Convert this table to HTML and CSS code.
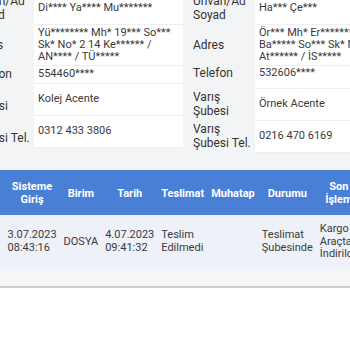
FILE: index.html
```html
<!DOCTYPE html>
<html lang="tr">
<head>
<meta charset="utf-8">
<title>Kargo Takip</title>
<link rel="stylesheet" href="styles.css">
</head>
<body>
<section class="info">
  <div class="info-row">
    <table class="kv kv-left">
      <tr><th>Ünvan/Ad Soyad</th><td>Di**** Ya**** Mu*******</td></tr>
      <tr><th>Adres</th><td>Yü******** Mh* 19*** So*** Sk* No* 2 14 Ke****** / AN**** / TÜ*****</td></tr>
      <tr><th>Telefon</th><td>554460****</td></tr>
      <tr><th>Çıkış Şubesi</th><td>Kolej Acente</td></tr>
      <tr><th>Çıkış Şubesi Tel.</th><td>0312 433 3806</td></tr>
    </table>
    <table class="kv kv-right">
      <tr><th>Ünvan/Ad Soyad</th><td>Ha*** Çe***</td></tr>
      <tr><th>Adres</th><td>Ör*** Mh* Er******** Cd* Ba***** So*** Sk* No* 4 / At****** / İS*****</td></tr>
      <tr class="tall"><th>Telefon</th><td>532606****</td></tr>
      <tr><th>Varış Şubesi</th><td>Örnek Acente</td></tr>
      <tr><th>Varış Şubesi Tel.</th><td>0216 470 6169</td></tr>
    </table>
  </div>
</section>
<section class="moves">
  <table class="grid">
    <thead>
      <tr>
        <th>Sisteme Giriş</th>
        <th>Birim</th>
        <th>Tarih</th>
        <th>Teslimat</th>
        <th>Muhatap</th>
        <th>Durumu</th>
        <th>Son İşlem</th>
      </tr>
    </thead>
    <tbody>
      <tr>
        <td>3.07.2023 08:43:16</td>
        <td>DOSYA</td>
        <td>4.07.2023 09:41:32</td>
        <td>Teslim Edilmedi</td>
        <td></td>
        <td>Teslimat Şubesinde</td>
        <td>Kargo Araçtan İndirildi</td>
      </tr>
    </tbody>
  </table>
</section>
</body>
</html>
```

FILE: styles.css
```css
html, body {
  margin: 0;
  padding: 0;
  background: #ffffff;
  overflow: hidden;
}

body {
  font-family: Roboto, "Noto Sans", Arial, sans-serif;
  color: #333333;
  width: 350px;
  height: 350px;
}

.info {
  background: #f3f4f6;
  height: 170px;
  overflow: hidden;
}

.info-row {
  display: flex;
  align-items: flex-start;
  margin-top: -8px;
  margin-left: -38px;
  width: 500px;
}

.kv {
  border-collapse: collapse;
  table-layout: fixed;
  flex: none;
}

.kv-left { width: 221px; }
.kv-right { width: 232px; }

.kv th {
  width: 72px;
  box-sizing: border-box;
  padding: 2px 2px 2px 10px;
  font-weight: normal;
  font-size: 12px;
  line-height: 14px;
  text-align: left;
  vertical-align: middle;
  color: #333333;
}

.kv td {
  background: #ffffff;
  padding: 2px 6px 2px 4px;
  font-size: 11px;
  line-height: 12px;
  vertical-align: middle;
  color: #3a3a3a;
  border-bottom: 1px solid #eceef1;
}

.kv-right tr.tall > th,
.kv-right tr.tall > td {
  vertical-align: top;
  padding-top: 1px;
  padding-bottom: 8px;
}

.moves {
  background: linear-gradient(#eef1f7 0px, #eef1f7 90px, #f5f6f8 100px);
  padding-bottom: 17px;
  border-bottom: 2px solid #cdcdcd;
  overflow: hidden;
}

.grid {
  border-collapse: collapse;
  width: 1px;
  font-size: 11px;
}

.grid th {
  background: #4a7fd6;
  color: #ffffff;
  font-weight: bold;
  line-height: 13px;
  padding: 10px 3.5px 9px;
  text-align: center;
  vertical-align: middle;
}

.grid td {
  background: #eef1f8;
  color: #3a3a3a;
  line-height: 12.5px;
  padding: 8px 3.5px;
  text-align: left;
  vertical-align: middle;
}

.grid th:first-child,
.grid td:first-child {
  padding-left: 7.5px;
}
```
